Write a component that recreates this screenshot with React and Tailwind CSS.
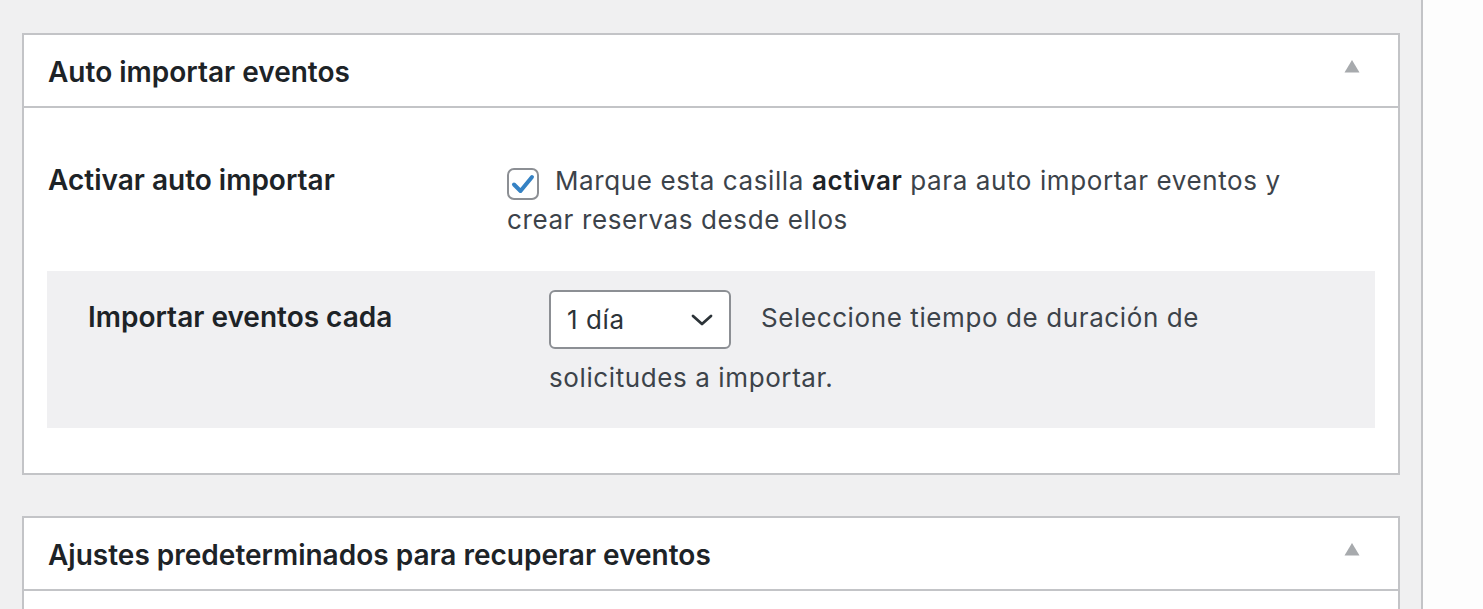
export default function App() {
  const Triangle = () => (
    <svg width="16" height="14" viewBox="0 0 16 14" className="mb-[9px] mr-[38px] shrink-0">
      <path d="M8 1 L15.5 13.5 L0.5 13.5 Z" fill="#a7aaad" />
    </svg>
  );
  return (
    <div
      className="flex min-h-screen w-full bg-[#f0f0f1]"
      style={{ fontFamily: 'Inter, "Liberation Sans", sans-serif' }}
    >
      <div className="w-[1421px] shrink-0 pl-[22px] pr-[21px] pt-[33px]">
        <div className="border-2 border-[#c3c4c7] bg-white">
          <div className="flex h-[73px] items-center justify-between border-b-2 border-[#c3c4c7] pl-[24px]">
            <h2 className="pt-[2px] text-[28px] font-semibold text-[#1d2327]">Auto importar eventos</h2>
            <Triangle />
          </div>
          <div className="px-[23px] pb-[45px]">
            <div className="flex pt-[54px]">
              <div className="w-[460px] shrink-0 pl-[1px] text-[28px] font-semibold leading-[36px] text-[#1d2327]">
                Activar auto importar
              </div>
              <div className="text-[26px] leading-[37px] tracking-[0.6px] text-[#3c434a]">
                <span className="relative top-[-1px] mr-[16px] inline-flex h-[32px] w-[32px] items-center justify-center rounded-[7px] border-2 border-[#8c8f94] bg-white align-[-6px]">
                  <svg width="24" height="22" viewBox="0 0 24 22">
                    <path d="M3 11.5 L9.5 18 L21 4" fill="none" stroke="#3582c4" strokeWidth="4" strokeLinecap="round" strokeLinejoin="round" />
                  </svg>
                </span>
                Marque esta casilla <b className="font-semibold text-[#1d2327]">activar</b> para auto importar eventos y
                <br />
                crear reservas desde ellos
              </div>
            </div>
            <div className="mt-[33px] flex bg-[#f0f0f2] pb-[32px] pl-[41px] pr-[41px] pt-[9px]">
              <div className="w-[461px] shrink-0 pt-[19px] text-[28px] font-semibold leading-[36px] text-[#1d2327]">
                Importar eventos cada
              </div>
              <div className="text-[26px] leading-[37px] tracking-[0.6px] text-[#3c434a]">
                <span className="my-[10px] mr-[30px] inline-flex h-[59px] w-[182px] items-center justify-between rounded-[6px] border-2 border-[#8c8f94] bg-white pl-[16px] pr-[16px] align-middle text-[#2c3338]">
                  <span>1 día</span>
                  <svg width="22" height="12" viewBox="0 0 22 12">
                    <path d="M2 2 L11 10 L20 2" fill="none" stroke="#2c3338" strokeWidth="2.8" strokeLinecap="round" strokeLinejoin="round" />
                  </svg>
                </span>
                Seleccione tiempo de duración de solicitudes a importar.
              </div>
            </div>
          </div>
        </div>
        <div className="mt-[41px] border-2 border-b-0 border-[#c3c4c7] bg-white">
          <div className="flex h-[73px] items-center justify-between border-b-2 border-[#c3c4c7] pl-[24px]">
            <h2 className="pt-[2px] text-[28px] font-semibold text-[#1d2327]">Ajustes predeterminados para recuperar eventos</h2>
            <Triangle />
          </div>
          <div className="h-[40px]" />
        </div>
      </div>
      <div className="w-[2px] shrink-0 bg-[#c3c4c7]" />
      <div className="flex-1 bg-[#fdfdfd]" />
    </div>
  );
}
